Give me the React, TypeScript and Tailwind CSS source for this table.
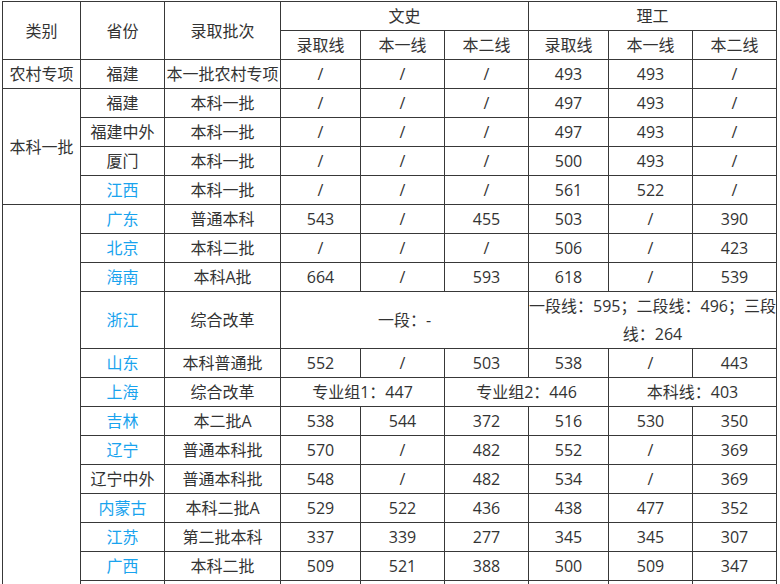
const BLUE = "text-[#19a3ee]";

type Row = {
  prov: string;
  link?: boolean;
  batch: string;
  cells: string[];
};

const firstGroup: Row[] = [
  { prov: "福建", batch: "本科一批", cells: ["/", "/", "/", "497", "493", "/"] },
  { prov: "福建中外", batch: "本科一批", cells: ["/", "/", "/", "497", "493", "/"] },
  { prov: "厦门", batch: "本科一批", cells: ["/", "/", "/", "500", "493", "/"] },
  { prov: "江西", link: true, batch: "本科一批", cells: ["/", "/", "/", "561", "522", "/"] },
];

const secondTop: Row[] = [
  { prov: "广东", link: true, batch: "普通本科", cells: ["543", "/", "455", "503", "/", "390"] },
  { prov: "北京", link: true, batch: "本科二批", cells: ["/", "/", "/", "506", "/", "423"] },
  { prov: "海南", link: true, batch: "本科A批", cells: ["664", "/", "593", "618", "/", "539"] },
];

const secondBottom: Row[] = [
  { prov: "吉林", link: true, batch: "本二批A", cells: ["538", "544", "372", "516", "530", "350"] },
  { prov: "辽宁", link: true, batch: "普通本科批", cells: ["570", "/", "482", "552", "/", "369"] },
  { prov: "辽宁中外", batch: "普通本科批", cells: ["548", "/", "482", "534", "/", "369"] },
  { prov: "内蒙古", link: true, batch: "本科二批A", cells: ["529", "522", "436", "438", "477", "352"] },
  { prov: "江苏", link: true, batch: "第二批本科", cells: ["337", "339", "277", "345", "345", "307"] },
  { prov: "广西", link: true, batch: "本科二批", cells: ["509", "521", "388", "500", "509", "347"] },
];

const td = "border border-[#383838] p-0 h-[29px] leading-[28px] text-center align-middle whitespace-nowrap";

function Cells({ row }: { row: Row }) {
  return (
    <>
      <td className={`${td} ${row.link ? BLUE : ""}`}>{row.prov}</td>
      <td className={td}>{row.batch}</td>
      {row.cells.map((c, i) => (
        <td key={i} className={td}>
          {c}
        </td>
      ))}
    </>
  );
}

export default function App() {
  return (
    <div className="min-h-screen bg-white pl-[2px] pt-[1px]">
      <table
        className="table-fixed border-collapse text-[16px] text-[#333]"
        style={{ fontFamily: '"Open Sans", "Noto Sans CJK SC", sans-serif' }}
      >
        <colgroup>
          <col className="w-[78px]" />
          <col className="w-[84px]" />
          <col className="w-[116px]" />
          <col className="w-[80px]" />
          <col className="w-[84px]" />
          <col className="w-[84px]" />
          <col className="w-[80px]" />
          <col className="w-[84px]" />
          <col className="w-[84px]" />
        </colgroup>
        <tbody>
          <tr>
            <td rowSpan={2} className={td}>类别</td>
            <td rowSpan={2} className={td}>省份</td>
            <td rowSpan={2} className={td}>录取批次</td>
            <td colSpan={3} className={td}>文史</td>
            <td colSpan={3} className={td}>理工</td>
          </tr>
          <tr>
            <td className={td}>录取线</td>
            <td className={td}>本一线</td>
            <td className={td}>本二线</td>
            <td className={td}>录取线</td>
            <td className={td}>本一线</td>
            <td className={td}>本二线</td>
          </tr>

          {/* 农村专项 */}
          <tr>
            <td className={td}>农村专项</td>
            <Cells row={{ prov: "福建", batch: "本一批农村专项", cells: ["/", "/", "/", "493", "493", "/"] }} />
          </tr>

          {/* 本科一批 */}
          {firstGroup.map((row, i) => (
            <tr key={row.prov}>
              {i === 0 && (
                <td rowSpan={firstGroup.length} className={td}>
                  本科一批
                </td>
              )}
              <Cells row={row} />
            </tr>
          ))}

          {/* 本科二批 */}
          {secondTop.map((row, i) => (
            <tr key={row.prov}>
              {i === 0 && <td rowSpan={14} className={td}></td>}
              <Cells row={row} />
            </tr>
          ))}
          <tr>
            <td className={`${td} h-[57px] ${BLUE}`}>浙江</td>
            <td className={td}>综合改革</td>
            <td colSpan={3} className={td}>一段：-</td>
            <td colSpan={3} className={`${td} whitespace-normal`}>
              一段线：595；二段线：496；三段
              <br />
              线：264
            </td>
          </tr>
          <tr>
            <Cells row={{ prov: "山东", link: true, batch: "本科普通批", cells: ["552", "/", "503", "538", "/", "443"] }} />
          </tr>
          <tr>
            <td className={`${td} ${BLUE}`}>上海</td>
            <td className={td}>综合改革</td>
            <td colSpan={2} className={td}>专业组1：447</td>
            <td colSpan={2} className={td}>专业组2：446</td>
            <td colSpan={2} className={td}>本科线：403</td>
          </tr>
          {secondBottom.map((row) => (
            <tr key={row.prov}>
              <Cells row={row} />
            </tr>
          ))}
          <tr>
            {Array.from({ length: 8 }).map((_, i) => (
              <td key={i} className={td}></td>
            ))}
          </tr>
        </tbody>
      </table>
    </div>
  );
}
